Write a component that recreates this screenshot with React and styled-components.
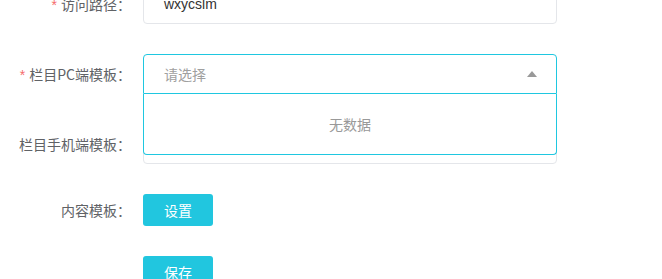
import React from "react";
import styled, { createGlobalStyle } from "styled-components";

const GlobalStyle = createGlobalStyle`
  body {
    margin: 0;
    background: #fff;
    font-family: "Liberation Sans", "Noto Sans CJK SC", sans-serif;
    font-size: 14px;
  }
`;

// 폼 전체 - 첫 줄은 위로 잘려 있음
const Form = styled.div`
  padding-top: 1px;
  margin-top: -17px;
`;

const FormItem = styled.div`
  display: flex;
  align-items: center;
  margin-bottom: 30px;
`;

const Label = styled.label`
  width: 143px;
  box-sizing: border-box;
  padding-right: 12px;
  text-align: right;
  color: #606266;
  font-size: 14px;
  line-height: 20px;
  font-family: "Noto Sans CJK SC", "Liberation Sans", sans-serif;
`;

const Star = styled.span`
  color: #f56c6c;
  margin-right: 4px;
  font-family: "Liberation Sans", sans-serif;
`;

const Control = styled.div`
  width: 414px;
  position: relative;
`;

const Input = styled.div`
  height: 40px;
  box-sizing: border-box;
  border: 1px solid ${({ $active }) => ($active ? "#1fc7e0" : "#e4e6ea")};
  border-radius: ${({ $open }) => ($open ? "4px 4px 0 0" : "4px")};
  padding: 0 19px 0 20px;
  display: flex;
  align-items: center;
  justify-content: space-between;
  color: ${({ $placeholder }) => ($placeholder ? "#a0a0a0" : "#333")};
  font-size: 14px;
  background: #fff;
`;

const Arrow = styled.span`
  width: 0;
  height: 0;
  border-left: 5px solid transparent;
  border-right: 5px solid transparent;
  border-bottom: 6px solid #999;
`;

// 드롭다운 - 아래 입력칸 위에 겹쳐서 표시
const Dropdown = styled.div`
  position: absolute;
  top: 40px;
  left: 0;
  right: 0;
  height: 61px;
  box-sizing: border-box;
  border: 1px solid #1fc7e0;
  border-top: none;
  border-radius: 0 0 4px 4px;
  background: #fff;
  z-index: 10;
  display: flex;
  align-items: center;
  justify-content: center;
  color: #999;
  font-size: 14px;
  font-family: "Noto Sans CJK SC", sans-serif;
`;

const Button = styled.button`
  display: block;
  width: 70px;
  height: 32px;
  border: none;
  border-radius: 3px;
  background: #21c6df;
  color: #fff;
  font-size: 14px;
  font-family: "Noto Sans CJK SC", sans-serif;
  padding: 0;
  cursor: pointer;
`;

const App = () => {
  return (
    <>
      <GlobalStyle />
      <Form>
        <FormItem>
          <Label>
            <Star>*</Star>访问路径：
          </Label>
          <Control>
            <Input>wxycslm</Input>
          </Control>
        </FormItem>
        <FormItem>
          <Label>
            <Star>*</Star>栏目PC端模板：
          </Label>
          <Control>
            <Input $active $open $placeholder>
              请选择
              <Arrow />
            </Input>
            <Dropdown>无数据</Dropdown>
          </Control>
        </FormItem>
        <FormItem>
          <Label>栏目手机端模板：</Label>
          <Control>
            <Input $placeholder>请选择</Input>
          </Control>
        </FormItem>
        <FormItem>
          <Label>内容模板：</Label>
          <Control>
            <Button>设置</Button>
          </Control>
        </FormItem>
        <FormItem>
          <Label></Label>
          <Control>
            <Button>保存</Button>
          </Control>
        </FormItem>
      </Form>
    </>
  );
};

export default App;
